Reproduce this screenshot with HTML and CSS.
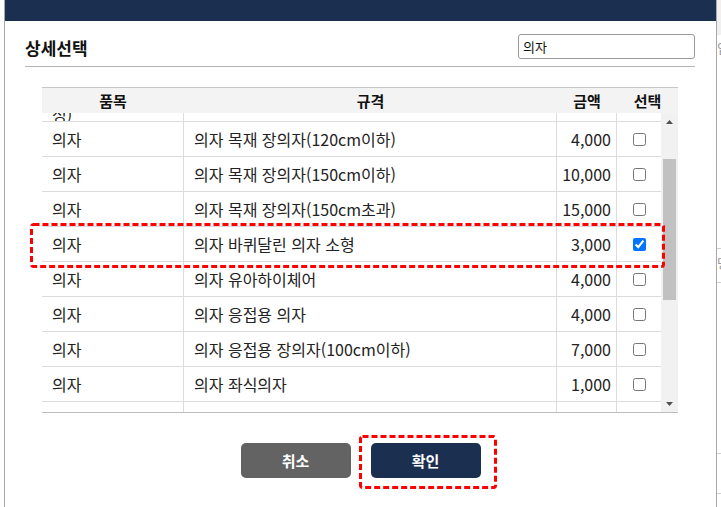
FILE: index.html
```html
<!DOCTYPE html>
<html lang="ko">
<head>
<meta charset="utf-8">
<title>상세선택</title>
<link rel="stylesheet" href="styles.css">
</head>
<body>
<div class="screen">
  <div class="lgap"></div>
  <div class="modal">
    <div class="topbar"></div>
    <div class="titlebar">
      <h2 class="title">상세선택</h2>
      <input class="search" type="text" value="의자">
    </div>
    <div class="grid">
      <div class="thead">
        <div class="th">품목</div>
        <div class="th">규격</div>
        <div class="th">금액</div>
        <div class="th">선택</div>
      </div>
      <div class="tbody">
        <div class="viewport">
          <div class="rows">
            <div class="row partial">
              <div class="td name"><span>정)</span></div>
              <div class="td"></div>
              <div class="td amt"></div>
              <div class="td chk"></div>
            </div>
            <div class="row">
              <div class="td">의자</div>
              <div class="td">의자 목재 장의자(120cm이하)</div>
              <div class="td amt">4,000</div>
              <div class="td chk"><input type="checkbox"></div>
            </div>
            <div class="row">
              <div class="td">의자</div>
              <div class="td">의자 목재 장의자(150cm이하)</div>
              <div class="td amt">10,000</div>
              <div class="td chk"><input type="checkbox"></div>
            </div>
            <div class="row">
              <div class="td">의자</div>
              <div class="td">의자 목재 장의자(150cm초과)</div>
              <div class="td amt">15,000</div>
              <div class="td chk"><input type="checkbox"></div>
            </div>
            <div class="row">
              <div class="td">의자</div>
              <div class="td">의자 바퀴달린 의자 소형</div>
              <div class="td amt">3,000</div>
              <div class="td chk"><input type="checkbox" checked></div>
            </div>
            <div class="row">
              <div class="td">의자</div>
              <div class="td">의자 유아하이체어</div>
              <div class="td amt">4,000</div>
              <div class="td chk"><input type="checkbox"></div>
            </div>
            <div class="row">
              <div class="td">의자</div>
              <div class="td">의자 응접용 의자</div>
              <div class="td amt">4,000</div>
              <div class="td chk"><input type="checkbox"></div>
            </div>
            <div class="row">
              <div class="td">의자</div>
              <div class="td">의자 응접용 장의자(100cm이하)</div>
              <div class="td amt">7,000</div>
              <div class="td chk"><input type="checkbox"></div>
            </div>
            <div class="row">
              <div class="td">의자</div>
              <div class="td">의자 좌식의자</div>
              <div class="td amt">1,000</div>
              <div class="td chk"><input type="checkbox"></div>
            </div>
            <div class="row">
              <div class="td"></div>
              <div class="td"></div>
              <div class="td amt"></div>
              <div class="td chk"></div>
            </div>
          </div>
        </div>
        <div class="sbar">
          <div class="sb-btn"><svg width="7" height="4" viewBox="0 0 7 4"><polygon points="0,4 7,4 3.5,0" fill="#505050"/></svg></div>
          <div class="sb-track"><div class="thumb"></div></div>
          <div class="sb-btn"><svg width="7" height="4" viewBox="0 0 7 4"><polygon points="0,0 7,0 3.5,4" fill="#505050"/></svg></div>
        </div>
      </div>
    </div>
    <div class="btns">
      <button class="btn cancel" type="button">취소</button>
      <button class="btn ok" type="button">확인</button>
    </div>
  </div>
  <div class="rside">
    <div class="rs-top"></div>
    <div class="rs-glyph g1">입</div>
    <div class="rs-line l1"></div>
    <div class="rs-glyph g2">명</div>
    <div class="rs-line l2"></div>
    <div class="rs-line l3"></div>
    <div class="rs-line l4"></div>
  </div>
  <svg class="mark mark-row" width="635" height="45" viewBox="0 0 635 45"><rect x="1.5" y="1.5" width="632" height="42" rx="2" fill="none" stroke="#f00" stroke-width="3" stroke-dasharray="6 3"/></svg>
  <svg class="mark mark-btn" width="138" height="54" viewBox="0 0 138 54"><rect x="1.5" y="1.5" width="135" height="51" rx="2" fill="none" stroke="#f00" stroke-width="3" stroke-dasharray="6 3"/></svg>
</div>
</body>
</html>
```

FILE: styles.css
```css
html, body {
  margin: 0;
  padding: 0;
  background: #fff;
}

.screen {
  position: relative;
  display: flex;
  width: 721px;
  height: 507px;
  overflow: hidden;
  background: #fff;
  font-family: "Noto Sans CJK KR", "Noto Sans", sans-serif;
  color: #222;
}

.lgap {
  width: 4px;
  flex: none;
}

.modal {
  width: 711px;
  flex: none;
  border-left: 1px solid #a8a8a8;
  border-right: 1px solid #a8a8a8;
  display: flex;
  flex-direction: column;
  background: #fff;
}

.topbar {
  height: 21px;
  flex: none;
  background: #1b2f50;
}

.titlebar {
  display: flex;
  align-items: center;
  justify-content: space-between;
  height: 25px;
  margin: 0 21px 0 20px;
  padding: 13px 0 7px;
  border-bottom: 1px solid #b3b3b3;
}

.title {
  margin: 0;
  padding-top: 3px;
  font-size: 17px;
  font-weight: 700;
  line-height: 20px;
  color: #111;
}

.search {
  box-sizing: border-box;
  width: 177px;
  height: 25px;
  margin: 0;
  padding: 0 4px;
  border: 1px solid #999;
  border-radius: 3px;
  font-family: "Noto Sans CJK KR", "Noto Sans", sans-serif;
  font-size: 13px;
  color: #111;
  background: #fff;
  outline: none;
}

.grid {
  margin: 20px 0 0 37px;
  width: 636px;
}

.thead {
  display: grid;
  grid-template-columns: 142px 373px 60px 61px;
  height: 25px;
  border-top: 1px solid #c6c6c6;
  background: #f3f3f3;
}

.th {
  font-size: 15px;
  font-weight: 700;
  line-height: 25px;
  text-align: center;
  color: #111;
}

.tbody {
  display: flex;
  height: 299px;
  border-bottom: 1px solid #bdbdbd;
}

.viewport {
  width: 619px;
  overflow: hidden;
}

.rows {
  margin-top: -26px;
}

.row {
  display: grid;
  grid-template-columns: 142px 373px 60px 44px;
  height: 35px;
  box-sizing: border-box;
  border-bottom: 1px solid #dcdcdc;
}

.td {
  display: flex;
  align-items: center;
  padding: 0 10px;
  border-right: 1px solid #dcdcdc;
  font-size: 16px;
  white-space: nowrap;
  overflow: hidden;
}

.td.amt {
  justify-content: flex-end;
  padding: 0 5px 0 0;
}

.td.chk {
  justify-content: center;
  padding: 0;
  border-right: none;
}

.chk input {
  width: 13px;
  height: 13px;
  margin: 0;
}

.partial .name {
  align-items: flex-end;
}

.partial .name span {
  line-height: 14px;
}

.sbar {
  width: 17px;
  display: flex;
  flex-direction: column;
  background: #f1f1f1;
}

.sb-btn {
  height: 17px;
  flex: none;
  display: flex;
  align-items: center;
  justify-content: center;
}

.sb-btn svg {
  display: block;
}

.sb-track {
  flex: 1;
}

.thumb {
  margin: 29px 2px 0;
  height: 141px;
  background: #c1c1c1;
}

.btns {
  display: flex;
  justify-content: center;
  gap: 20px;
  margin-top: 30px;
}

.btn {
  width: 110px;
  height: 35px;
  border: none;
  border-radius: 5px;
  padding: 0;
  font-family: "Noto Sans CJK KR", "Noto Sans", sans-serif;
  font-size: 15px;
  font-weight: 700;
  color: #fff;
}

.cancel {
  background: #636363;
}

.ok {
  background: #1b2f50;
}

.rside {
  flex: 1;
  display: flex;
  flex-direction: column;
  overflow: hidden;
}

.rs-top {
  height: 35px;
  flex: none;
  background: #f0f0f0;
}

.rs-glyph {
  font-size: 13px;
  line-height: 16px;
  color: #999;
  white-space: nowrap;
}

.g1 {
  margin-top: 5px;
}

.rs-line {
  height: 0;
  border-top: 1px solid #d0d0d0;
}

.l1 {
  margin-top: 192px;
}

.g2 {
  margin-top: 6px;
}

.l2 {
  margin-top: 11px;
}

.l3 {
  margin-top: 170px;
}

.l4 {
  margin-top: 39px;
}

.mark {
  position: absolute;
  pointer-events: none;
}

.mark-row {
  left: 30px;
  top: 223px;
}

.mark-btn {
  left: 359px;
  top: 435px;
}
```
